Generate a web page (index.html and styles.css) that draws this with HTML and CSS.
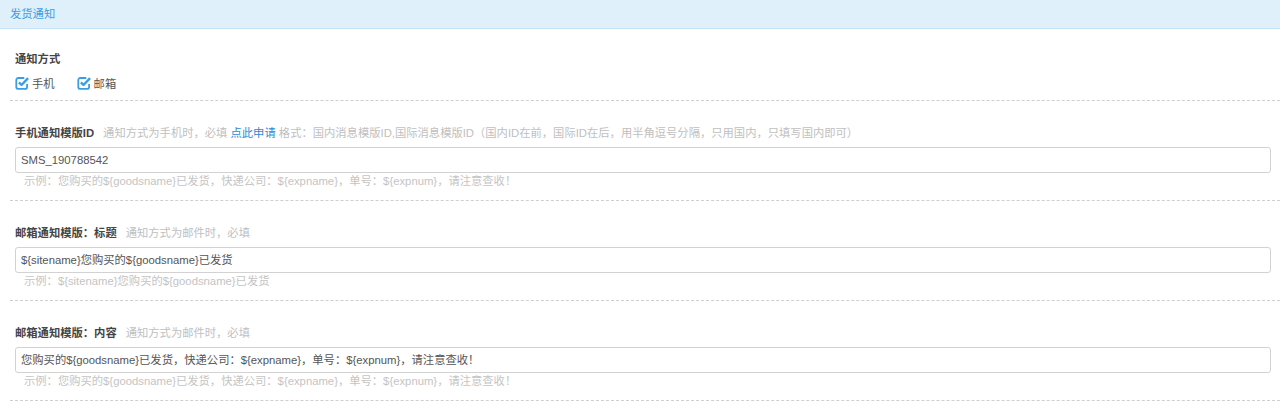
FILE: index.html
```html
<!DOCTYPE html>
<html lang="zh-CN">
<head>
<meta charset="utf-8">
<title>发货通知</title>
<link rel="stylesheet" href="styles.css">
</head>
<body>
<div class="panel">
  <div class="panel-heading">发货通知</div>
  <div class="panel-body">
    <div class="group group-first">
      <div class="label">通知方式</div>
      <div class="checks">
        <label class="check">
          <svg class="cb" viewBox="0 0 14 14" width="14" height="14">
            <path d="M9.3 2H3.2A1.9 1.9 0 0 0 1.3 3.9v7a1.9 1.9 0 0 0 1.9 1.9h7a1.9 1.9 0 0 0 1.9-1.9V8" fill="none" stroke="#3c9ee2" stroke-width="1.8"/>
            <path d="M3.9 6.4l2.6 2.6 6.6-6.8" fill="none" stroke="#3c9ee2" stroke-width="2.4" stroke-linejoin="round"/>
          </svg>
          <span>手机</span>
        </label>
        <label class="check">
          <svg class="cb" viewBox="0 0 14 14" width="14" height="14">
            <path d="M9.3 2H3.2A1.9 1.9 0 0 0 1.3 3.9v7a1.9 1.9 0 0 0 1.9 1.9h7a1.9 1.9 0 0 0 1.9-1.9V8" fill="none" stroke="#3c9ee2" stroke-width="1.8"/>
            <path d="M3.9 6.4l2.6 2.6 6.6-6.8" fill="none" stroke="#3c9ee2" stroke-width="2.4" stroke-linejoin="round"/>
          </svg>
          <span>邮箱</span>
        </label>
      </div>
    </div>

    <div class="group">
      <div class="label">手机通知模版ID<span class="hint">通知方式为手机时，必填 <a class="link">点此申请</a> 格式：国内消息模版ID,国际消息模版ID（国内ID在前，国际ID在后，用半角逗号分隔，只用国内，只填写国内即可）</span></div>
      <div class="input">SMS_190788542</div>
      <div class="example">示例：您购买的${goodsname}已发货，快递公司：${expname}，单号：${expnum}，请注意查收！</div>
    </div>

    <div class="group">
      <div class="label">邮箱通知模版：标题<span class="hint">通知方式为邮件时，必填</span></div>
      <div class="input">${sitename}您购买的${goodsname}已发货</div>
      <div class="example">示例：${sitename}您购买的${goodsname}已发货</div>
    </div>

    <div class="group">
      <div class="label">邮箱通知模版：内容<span class="hint">通知方式为邮件时，必填</span></div>
      <div class="input">您购买的${goodsname}已发货，快递公司：${expname}，单号：${expnum}，请注意查收！</div>
      <div class="example">示例：您购买的${goodsname}已发货，快递公司：${expname}，单号：${expnum}，请注意查收！</div>
    </div>
  </div>
</div>
</body>
</html>
```

FILE: styles.css
```css
html, body {
  margin: 0;
  padding: 0;
  background: #ffffff;
}
body {
  font-family: "Liberation Sans", "Noto Sans CJK SC", sans-serif;
  font-size: 11.3px;
  color: #555;
  overflow: hidden;
}
.panel-heading {
  height: 28px;
  line-height: 28px;
  padding-left: 10px;
  background: #dff0fb;
  border-bottom: 1px solid #c4e3f7;
  color: #3a9fe3;
}
.panel-body {
  padding-left: 10px;
}
.group {
  padding: 25px 9px 11px 5px;
  border-bottom: 1px dashed #cfcfcf;
}
.group-first {
  padding-top: 23px;
  padding-bottom: 9px;
}
.label {
  font-weight: bold;
  color: #444;
  line-height: 14px;
  height: 14px;
  white-space: nowrap;
}
.hint {
  font-weight: normal;
  color: #c0c0c0;
  margin-left: 9px;
}
.link {
  color: #2b8ad6;
}
.checks {
  display: flex;
  gap: 22px;
  margin-top: 9px;
  height: 16px;
  align-items: center;
}
.check {
  display: flex;
  align-items: center;
  gap: 3px;
  color: #555;
}
.cb {
  display: block;
}
.input {
  margin-top: 7px;
  height: 24px;
  line-height: 24px;
  border: 1px solid #d2d2d2;
  border-radius: 3px;
  padding-left: 5px;
  color: #555;
}
.example {
  padding-left: 9px;
  line-height: 16px;
  height: 16px;
  color: #c4c4c4;
}
```
